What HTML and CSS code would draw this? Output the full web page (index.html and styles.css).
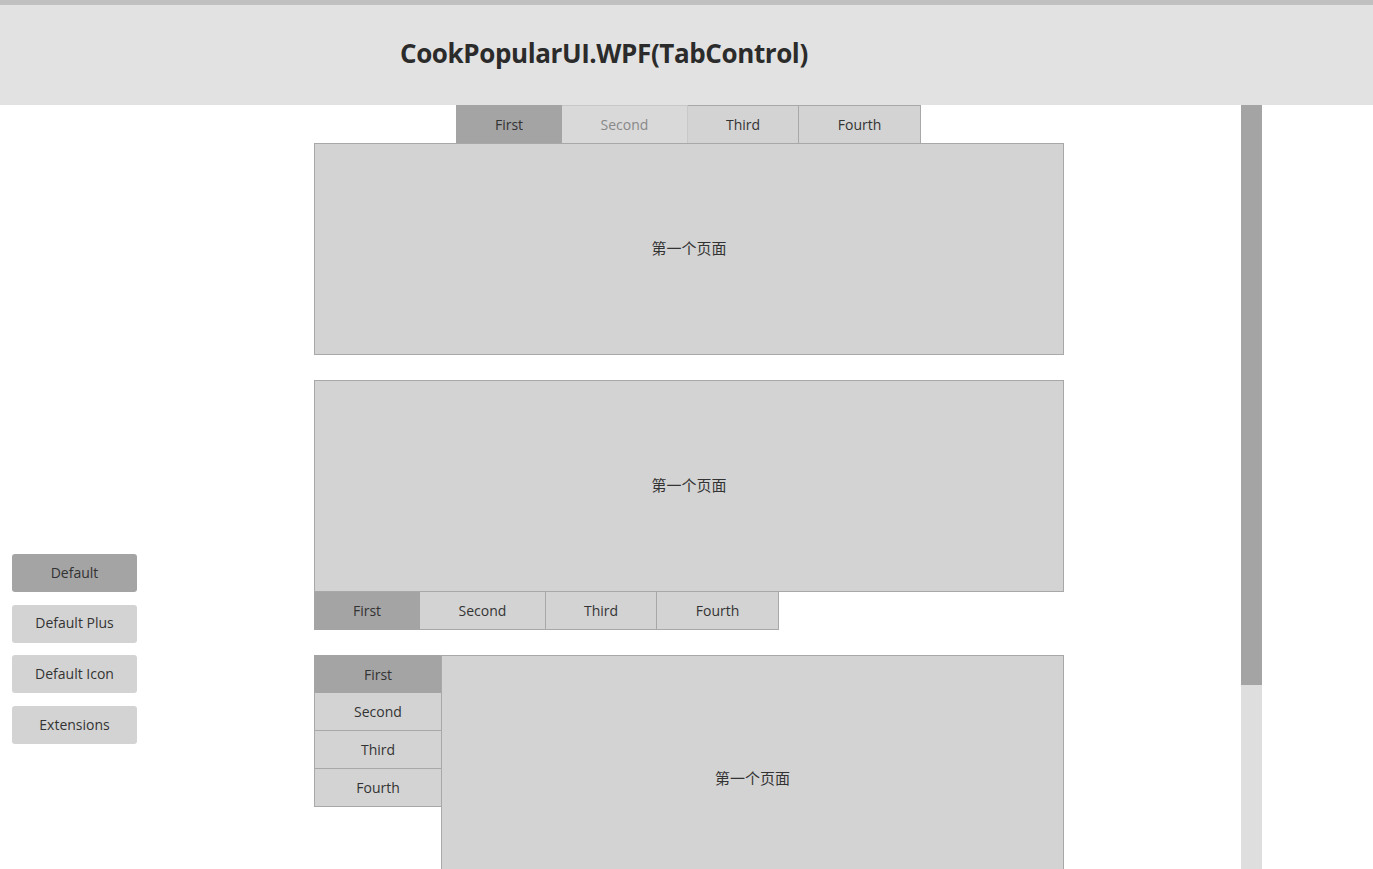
FILE: index.html
```html
<!DOCTYPE html>
<html lang="en">
<head>
  <meta charset="UTF-8">
  <title>CookPopularUI.WPF(TabControl)</title>
  <link rel="stylesheet" href="styles.css">
</head>
<body>
  <div class="topline"></div>
  <header>
    <h1>CookPopularUI.WPF(TabControl)</h1>
  </header>

  <div class="layout">
    <nav class="sidebar">
      <button class="nav-btn active">Default</button>
      <button class="nav-btn">Default Plus</button>
      <button class="nav-btn">Default Icon</button>
      <button class="nav-btn">Extensions</button>
    </nav>

    <main class="content">
      <!-- Tabs on top -->
      <div class="tabcontrol top">
        <div class="tabstrip">
          <div class="tab selected w1">First</div>
          <div class="tab hover w2">Second</div>
          <div class="tab w3">Third</div>
          <div class="tab w4">Fourth</div>
        </div>
        <div class="panel"><span>第一个页面</span></div>
      </div>

      <!-- Tabs on bottom -->
      <div class="tabcontrol bottom">
        <div class="panel"><span>第一个页面</span></div>
        <div class="tabstrip">
          <div class="tab selected w1">First</div>
          <div class="tab w2">Second</div>
          <div class="tab w3">Third</div>
          <div class="tab w4">Fourth</div>
        </div>
      </div>

      <!-- Tabs on left -->
      <div class="tabcontrol left">
        <div class="tabstrip">
          <div class="tab selected">First</div>
          <div class="tab">Second</div>
          <div class="tab">Third</div>
          <div class="tab">Fourth</div>
        </div>
        <div class="panel"><span>第一个页面</span></div>
      </div>
    </main>

    <div class="scrollbar">
      <div class="thumb"></div>
    </div>
    <div class="right-space"></div>
  </div>
</body>
</html>
```

FILE: styles.css
```css
/* General styles */
body {
  margin: 0;
  padding: 0;
  background: #fff;
  color: #333;
  font-family: "Open Sans", "Noto Sans CJK SC", sans-serif;
  overflow: hidden;
}

.topline {
  height: 5px;
  background: #c0c0c0;
}

header {
  height: 100px;
  background: #e2e2e2;
  display: flex;
  align-items: center;
  padding-left: 400px;
}

header h1 {
  margin: 0 0 4px;
  font-size: 26px;
  font-weight: 700;
  color: #2b2b2b;
  letter-spacing: -0.4px;
}

.layout {
  display: flex;
  height: 764px;
}

/* Left navigation */
.sidebar {
  width: 125px;
  padding: 449px 0 0 12px;
  display: flex;
  flex-direction: column;
  gap: 12.7px;
}

.nav-btn {
  height: 38px;
  width: 125px;
  border: none;
  border-radius: 3px;
  background: #d3d3d3;
  color: #333;
  font-family: "Open Sans", sans-serif;
  font-size: 14px;
  padding: 0 0 2px;
}

.nav-btn.active {
  background: #a4a4a4;
}

/* Tab controls */
.content {
  width: 1104px;
  display: flex;
  flex-direction: column;
  align-items: center;
  gap: 25px;
}

.tabcontrol {
  width: 750px;
  display: flex;
  flex-direction: column;
}

.tabcontrol.top .tabstrip {
  align-self: center;
  margin-left: -1px;
}

.tabcontrol.bottom .tabstrip {
  align-self: flex-start;
}

.tabstrip {
  display: flex;
}

.tab {
  box-sizing: border-box;
  height: 38px;
  display: flex;
  align-items: center;
  justify-content: center;
  background: #d3d3d3;
  border: 1px solid #a8a8a8;
  font-size: 14px;
  color: #333;
}

.tab + .tab {
  border-left: none;
}

.tab.selected {
  background: #a4a4a4;
  border-color: #a4a4a4;
}

.tab.hover {
  background: #d9d9d9;
  color: #888;
  border-color: #c8c8c8;
}

.w1 { width: 106px; }
.w2 { width: 126px; }
.w3 { width: 111px; }
.w4 { width: 122px; }

.top .tab {
  border-bottom: none;
}

.bottom .tab {
  border-top: none;
}

.panel {
  box-sizing: border-box;
  height: 212px;
  background: #d3d3d3;
  border: 1px solid #a8a8a8;
  display: flex;
  align-items: center;
  justify-content: center;
  font-family: "Noto Sans CJK SC", sans-serif;
  font-size: 15px;
  color: #333;
}

.panel span {
  margin-bottom: 4px;
}

/* left-side tabs */
.tabcontrol.left {
  flex-direction: row;
  align-items: flex-start;
}

.left .tabstrip {
  flex-direction: column;
  width: 127px;
}

.left .tab {
  width: 127px;
  border-right: none;
  border-left: 1px solid #a8a8a8;
}

.left .tab + .tab {
  border-top: none;
}

.left .tab.selected {
  border-color: #a4a4a4;
}

.left .panel {
  flex: 1;
  height: 248px;
}

/* Scrollbar */
.scrollbar {
  width: 21px;
  background: #dedede;
}

.scrollbar .thumb {
  height: 580px;
  background: #a4a4a4;
}

.right-space {
  flex: 1;
}
```
